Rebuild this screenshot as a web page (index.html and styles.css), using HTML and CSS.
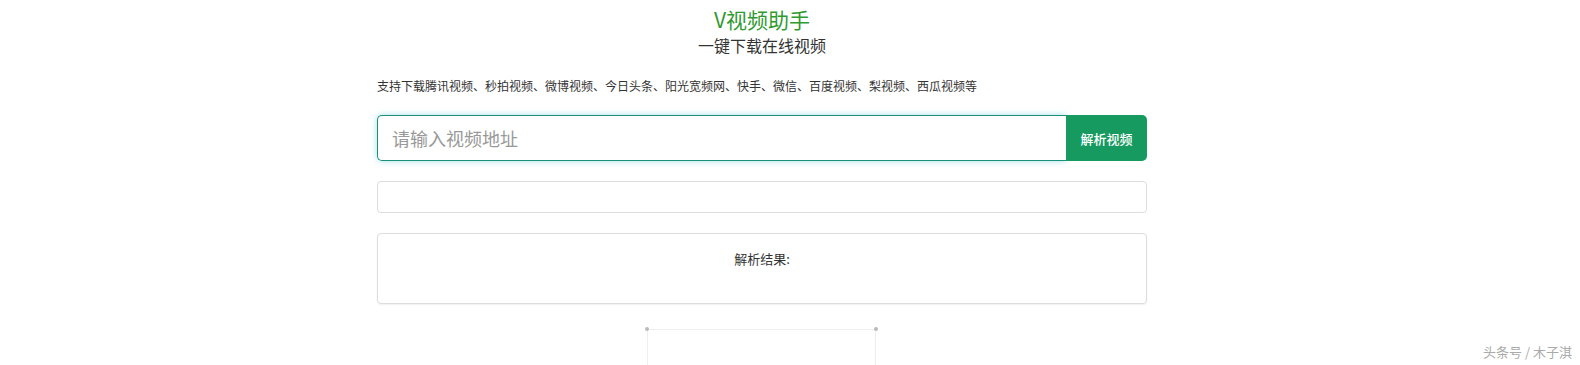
FILE: index.html
```html
<!DOCTYPE html>
<html lang="zh-CN">

<head>
    <meta charset="UTF-8">
    <meta name="viewport" content="width=device-width, initial-scale=1.0">
    <title>V视频助手</title>
    <link rel="stylesheet" href="styles.css">
</head>

<body>
    <div class="container">
        <h1 class="title">V视频助手</h1>
        <h2 class="subtitle">一键下载在线视频</h2>
        <p class="support">支持下载腾讯视频、秒拍视频、微博视频、今日头条、阳光宽频网、快手、微信、百度视频、梨视频、西瓜视频等</p>

        <form class="search" id="parseForm">
            <input type="text" class="search-input" placeholder="请输入视频地址">
            <button type="submit" class="search-btn">解析视频</button>
        </form>

        <div class="link-box"></div>

        <div class="result-box">
            <p>解析结果:</p>
        </div>

        <div class="player">
            <span class="dot dot-left"></span>
            <span class="dot dot-right"></span>
        </div>
    </div>

    <div class="watermark">头条号 / 木子淇</div>
</body>

</html>
```

FILE: styles.css
```css
body {
    font-family: "Noto Sans CJK SC", "Liberation Sans", sans-serif;
    margin: 0;
    padding: 0;
    background-color: #ffffff;
    color: #333;
    height: 365px;
    overflow: hidden;
}

.container {
    width: 770px;
    margin-left: 377px;
    display: flex;
    flex-direction: column;
}

.title {
    margin: 3px 0 0;
    font-size: 21px;
    font-weight: normal;
    line-height: 32px;
    color: #2f9a2f;
    text-align: center;
}

.subtitle {
    margin: 0;
    font-size: 16px;
    font-weight: normal;
    line-height: 20px;
    color: #333;
    text-align: center;
}

.support {
    margin: 22px 0 0;
    font-size: 12px;
    line-height: 18px;
    color: #333;
}

.search {
    display: flex;
    margin-top: 20px;
    height: 46px;
}

.search-input {
    flex: 1;
    box-sizing: border-box;
    height: 46px;
    padding: 0 14px;
    font-family: inherit;
    font-size: 18px;
    color: #333;
    border: 1px solid #1b8f78;
    border-right: none;
    border-radius: 5px 0 0 5px;
    box-shadow: 0 0 6px rgba(102, 204, 221, 0.6);
    outline: none;
}

.search-input::placeholder {
    color: #999;
}

.search-btn {
    width: 81px;
    height: 46px;
    border: none;
    border-radius: 0 5px 5px 0;
    background-color: #169a5f;
    color: #fff;
    font-family: inherit;
    font-size: 13px;
    font-weight: 500;
    cursor: pointer;
}

.link-box {
    margin-top: 20px;
    height: 32px;
    box-sizing: border-box;
    border: 1px solid #ddd;
    border-radius: 4px;
}

.result-box {
    margin-top: 20px;
    height: 71px;
    box-sizing: border-box;
    border: 1px solid #ddd;
    border-radius: 4px;
    box-shadow: 0 1px 2px rgba(0, 0, 0, 0.06);
    text-align: center;
}

.result-box p {
    margin: 15px 0 0;
    font-size: 13px;
    line-height: 20px;
}

.player {
    position: relative;
    align-self: flex-start;
    margin: 25px 0 0 270px;
    width: 227px;
    height: 36px;
    border-top: 1px solid #eee;
    border-left: 1px solid #eee;
    border-right: 1px solid #eee;
}

.dot {
    position: absolute;
    top: -3px;
    width: 4px;
    height: 4px;
    border-radius: 50%;
    background-color: #bbb;
}

.dot-left {
    left: -3px;
}

.dot-right {
    right: -3px;
}

.watermark {
    position: absolute;
    right: 8px;
    bottom: 4px;
    font-size: 13px;
    color: #aaa;
}
```
